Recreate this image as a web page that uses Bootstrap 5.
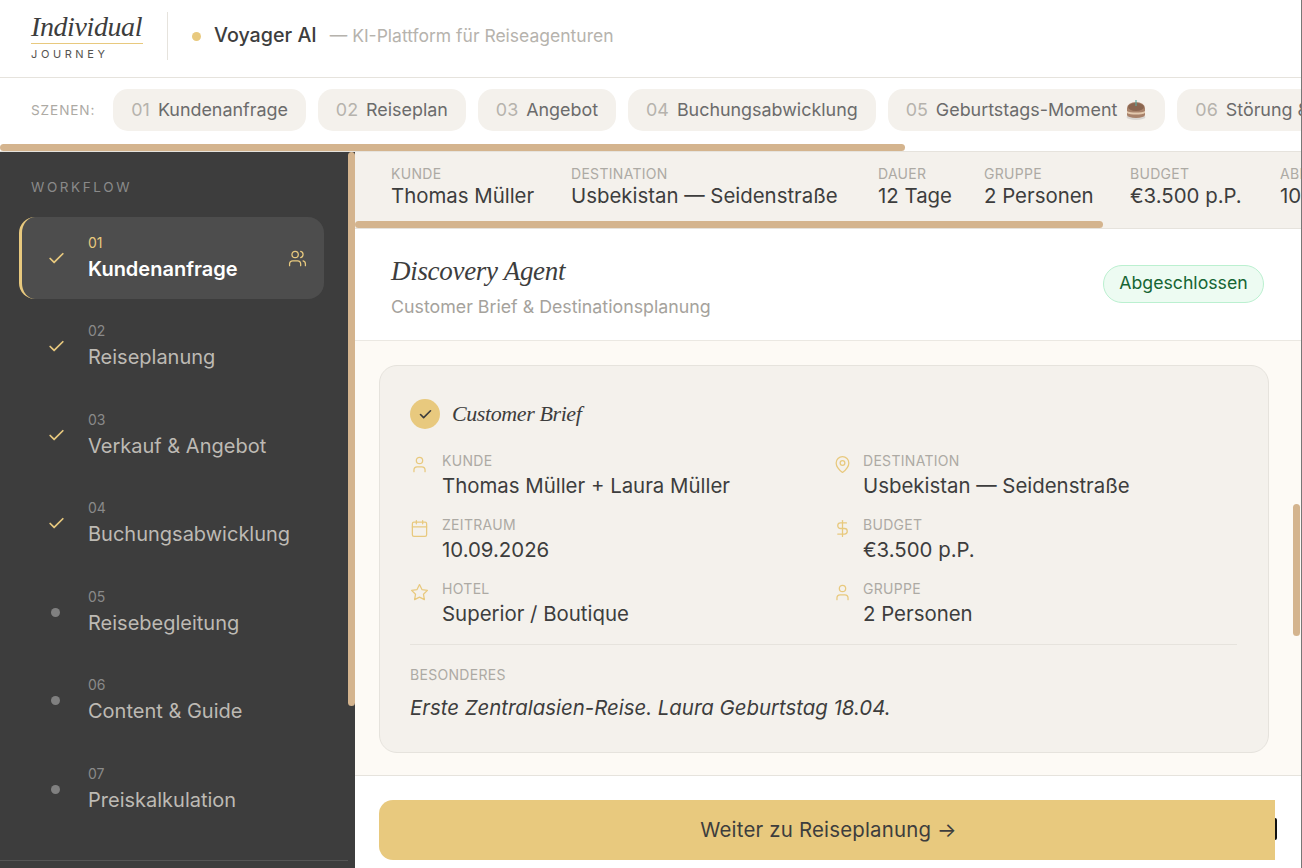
<!DOCTYPE html>
<html lang="de">
<head>
<meta charset="utf-8">
<title>Voyager AI</title>
<link href="https://cdn.jsdelivr.net/npm/bootstrap@5.3.0/dist/css/bootstrap.min.css" rel="stylesheet">
<style>
html,body{height:868px;overflow:hidden;margin:0}
body{font-family:"Inter","Noto Sans",sans-serif;color:#3d3d3d;background:#fff;border-right:1px solid #777;width:1302px}
.page-shell{height:868px;width:1301px}
.serif{font-family:"Liberation Serif",serif;font-style:italic}
.top-head{height:78px;border-bottom:1px solid #e6e3dd;padding:0 0 5px 31px}
.brand{width:112px;margin-top:-1px}
.brand-main{font-size:28px;line-height:31px;letter-spacing:-.4px;color:#3d3d3d;border-bottom:1px solid #e8c97e;height:33px;white-space:nowrap;font-weight:400}
.brand-sub{font-size:11px;letter-spacing:3.6px;line-height:14px;margin-top:3px;color:#55534f}
.head-rule{width:1px;height:48px;background:#e6e3dd;margin:0 24px 0 24px}
.head-dot{width:9px;height:9px;border-radius:50%;background:#e8c97e;margin-right:13px}
.head-name{font-size:19.7px;font-weight:500;letter-spacing:0;color:#3d3d3d;margin-right:13px}
.head-tag{font-size:17.5px;color:#b6b3ad}
.scene-bar{height:74px;padding-left:31px;padding-bottom:9px;gap:12px;border-bottom:1px solid #e6e3dd;overflow:hidden}
.scene-lbl{font-size:13.6px;letter-spacing:.9px;color:#adaaa4;margin-right:6px}
.scene-pill{height:42px;background:#f4f1ec;border-radius:15px;padding:0 18px;font-size:17.9px;color:#6b6b6b;flex-shrink:0;white-space:nowrap;gap:8px}
.scene-pill b{font-weight:400;color:#b6b3ad}
.thumb{position:absolute;background:#d4b48e;border-radius:4px}
.thumb-scene{left:0;bottom:0;width:905px;height:7px}
.work-area{height:716px}
.side{width:355px;background:#3d3d3d;padding:0 31px 0 19px;flex-shrink:0}
.thumb-side{right:0;top:0;width:7px;height:554px}
.side-title{font-size:13.5px;letter-spacing:2.6px;color:#8a8a8a;padding:27px 0 0 12px;height:65px;line-height:17px}
.step{height:82px;margin-bottom:6.5px;border-radius:16px;padding-left:25px;border-left:3px solid transparent}
.step-on{background:#4d4d4d;border-left-color:#e8c97e}
.step-mark{width:16px;margin-right:25px;line-height:0}
.step-dot{width:9px;height:9px;border-radius:50%;background:#808080;margin-left:4px}
.step-no{font-size:14px;line-height:18px;color:#8a8a8a;margin-top:-1px}
.step-on .step-no{color:#e8c97e}
.step-name{font-size:20px;line-height:26px;color:#bdbab4;margin-top:4px}
.step-on .step-name{color:#fff;font-weight:600}
.step-ic{margin-left:auto;margin-right:17px}
.side-rule{position:absolute;left:0;right:7px;bottom:7px;height:1px;background:#555}
.ctx{height:77px;background:#f4f1ec;padding:13px 0 0 36px;gap:36px;overflow:hidden;border-bottom:1px solid #e6e3dd;flex-shrink:0}
.ctx-item{flex-shrink:0;white-space:nowrap}
.ctx-item:nth-child(1){width:144px}
.ctx-item:nth-child(2){width:271px}
.ctx-item:nth-child(3){width:70px}
.ctx-item:nth-child(4){width:110px}
.ctx-item:nth-child(5){width:114px}
.ctx-l{font-size:14px;line-height:17px;letter-spacing:.3px;color:#adaaa4}
.ctx-v{font-size:20.4px;line-height:27px;color:#3d3d3d}
.thumb-ctx{left:0;bottom:0;width:748px;height:7px}
.agent{height:112px;padding:2px 37px 0 36px;border-bottom:1px solid #ebe8e2;flex-shrink:0}
.agent-name{font-size:27px;line-height:36px;letter-spacing:-.3px;color:#3d3d3d}
.agent-sub{font-size:17.8px;line-height:24px;color:#a5a29c;margin-top:6px}
.state{height:38px;border-radius:19px;background:#edfbf2;border:1px solid #bbf0d0;color:#166534;font-size:17.7px;width:161px;margin-top:-4px}
.body-pane{height:435px;background:#fdfaf5;padding:24px 32px 0 24px;flex-shrink:0;border-bottom:1px solid #e6e3dd}
.thumb-body{right:1px;top:352px;width:7px;height:132px}
.brief{height:388px;background:#f4f1ec;border:1px solid #e6e3dd;border-radius:18px;padding:33px 31px 0 30px}
.brief-check{width:30px;height:30px;border-radius:50%;background:#e8c97e}
.brief-name{font-size:22px;line-height:30px;letter-spacing:-.4px;margin-left:12px;color:#3d3d3d}
.fields{display:grid;grid-template-columns:423px 1fr;grid-auto-rows:64px;margin-top:15px}
.field-ic{width:32px;flex-shrink:0;padding-top:7px}
.field-ic2{width:30px}
.field-l{font-size:14px;line-height:17px;letter-spacing:.3px;color:#adaaa4;padding-top:8px}
.field-v{font-size:20.4px;line-height:27px;color:#3d3d3d;margin-top:3px}
.brief-rule{height:1px;background:#e6e3dd;margin-top:8px}
.note-l{font-size:14px;line-height:17px;letter-spacing:.3px;color:#adaaa4;margin-top:21px}
.note-v{font-size:20.4px;line-height:27px;font-style:italic;margin-top:11px}
.foot{height:92px;padding:24px 0 0 24px}
.go-btn{width:896px;height:60px;background:#e8c97e;border-radius:14px 0 0 14px;font-size:20.4px;letter-spacing:.2px;color:#3d3d3d;position:relative;padding-left:3px}
.go-btn::after{content:"";position:absolute;right:-1.5px;top:18px;width:1.5px;height:22px;background:#111;border-radius:0 2px 2px 0}
</style>
</head>
<body>
<div class="page-shell d-flex flex-column">
  <header class="top-head d-flex align-items-center flex-shrink-0">
    <div class="brand">
      <div class="brand-main serif">Individual</div>
      <div class="brand-sub">JOURNEY</div>
    </div>
    <div class="head-rule"></div>
    <span class="head-dot"></span>
    <span class="head-name">Voyager AI</span>
    <span class="head-tag">— KI-Plattform für Reiseagenturen</span>
  </header>

  <div class="scene-bar d-flex align-items-center position-relative flex-shrink-0">
    <span class="scene-lbl">SZENEN:</span>
    <span class="scene-pill d-flex align-items-center"><b>01</b>Kundenanfrage</span>
    <span class="scene-pill d-flex align-items-center"><b>02</b>Reiseplan</span>
    <span class="scene-pill d-flex align-items-center"><b>03</b>Angebot</span>
    <span class="scene-pill d-flex align-items-center"><b>04</b>Buchungsabwicklung</span>
    <span class="scene-pill d-flex align-items-center"><b>05</b>Geburtstags-Moment
      <svg width="22" height="22" viewBox="0 0 22 22"><ellipse cx="11" cy="18" rx="9.5" ry="3" fill="#d9d6d2"/><path d="M2 9a9 6 0 0 1 18 0v7a9 3 0 0 1-18 0z" fill="#a8826a"/><path d="M2 12c3 2 15 2 18 0v2c-3 2-15 2-18 0z" fill="#e3c9ae"/><ellipse cx="11" cy="8" rx="8" ry="4" fill="#8a6650"/><rect x="10.4" y="1" width="1.2" height="6" fill="#5fa8a0"/></svg></span>
    <span class="scene-pill d-flex align-items-center"><b>06</b>Störung &amp; Lösung</span>
    <div class="thumb thumb-scene"></div>
  </div>

  <div class="work-area d-flex">
    <aside class="side position-relative">
      <div class="side-title">WORKFLOW</div>
      <div class="step step-on d-flex align-items-center">
        <div class="step-mark"><svg width="19" height="19" viewBox="0 0 24 24" fill="none" stroke="#e8c97e" stroke-width="2.2" stroke-linecap="round" stroke-linejoin="round"><path d="M20 6 9 17l-5-5"/></svg></div>
        <div><div class="step-no">01</div><div class="step-name">Kundenanfrage</div></div>
        <svg class="step-ic" width="19" height="19" viewBox="0 0 24 24" fill="none" stroke="#e8c97e" stroke-width="1.6" stroke-linecap="round" stroke-linejoin="round"><path d="M16 21v-2a4 4 0 0 0-4-4H6a4 4 0 0 0-4 4v2"/><circle cx="9" cy="7" r="4"/><path d="M22 21v-2a4 4 0 0 0-3-3.87"/><path d="M16 3.13a4 4 0 0 1 0 7.75"/></svg>
      </div>
      <div class="step d-flex align-items-center">
        <div class="step-mark"><svg width="19" height="19" viewBox="0 0 24 24" fill="none" stroke="#e8c97e" stroke-width="2.2" stroke-linecap="round" stroke-linejoin="round"><path d="M20 6 9 17l-5-5"/></svg></div>
        <div><div class="step-no">02</div><div class="step-name">Reiseplanung</div></div>
      </div>
      <div class="step d-flex align-items-center">
        <div class="step-mark"><svg width="19" height="19" viewBox="0 0 24 24" fill="none" stroke="#e8c97e" stroke-width="2.2" stroke-linecap="round" stroke-linejoin="round"><path d="M20 6 9 17l-5-5"/></svg></div>
        <div><div class="step-no">03</div><div class="step-name">Verkauf &amp; Angebot</div></div>
      </div>
      <div class="step d-flex align-items-center">
        <div class="step-mark"><svg width="19" height="19" viewBox="0 0 24 24" fill="none" stroke="#e8c97e" stroke-width="2.2" stroke-linecap="round" stroke-linejoin="round"><path d="M20 6 9 17l-5-5"/></svg></div>
        <div><div class="step-no">04</div><div class="step-name">Buchungsabwicklung</div></div>
      </div>
      <div class="step d-flex align-items-center">
        <div class="step-mark"><div class="step-dot"></div></div>
        <div><div class="step-no">05</div><div class="step-name">Reisebegleitung</div></div>
      </div>
      <div class="step d-flex align-items-center">
        <div class="step-mark"><div class="step-dot"></div></div>
        <div><div class="step-no">06</div><div class="step-name">Content &amp; Guide</div></div>
      </div>
      <div class="step d-flex align-items-center">
        <div class="step-mark"><div class="step-dot"></div></div>
        <div><div class="step-no">07</div><div class="step-name">Preiskalkulation</div></div>
      </div>
      <div class="side-rule"></div>
      <div class="thumb thumb-side"></div>
    </aside>

    <main class="flex-grow-1 d-flex flex-column position-relative" style="min-width:0">
      <div class="ctx d-flex position-relative">
        <div class="ctx-item"><div class="ctx-l">KUNDE</div><div class="ctx-v">Thomas Müller</div></div>
        <div class="ctx-item"><div class="ctx-l">DESTINATION</div><div class="ctx-v">Usbekistan — Seidenstraße</div></div>
        <div class="ctx-item"><div class="ctx-l">DAUER</div><div class="ctx-v">12 Tage</div></div>
        <div class="ctx-item"><div class="ctx-l">GRUPPE</div><div class="ctx-v">2 Personen</div></div>
        <div class="ctx-item"><div class="ctx-l">BUDGET</div><div class="ctx-v">€3.500 p.P.</div></div>
        <div class="ctx-item"><div class="ctx-l">ABREISE</div><div class="ctx-v">10.09.2026</div></div>
        <div class="thumb thumb-ctx"></div>
      </div>

      <div class="agent d-flex align-items-center justify-content-between">
        <div>
          <div class="agent-name serif">Discovery Agent</div>
          <div class="agent-sub">Customer Brief &amp; Destinationsplanung</div>
        </div>
        <div class="state d-flex align-items-center justify-content-center">Abgeschlossen</div>
      </div>

      <div class="body-pane">
        <div class="brief">
          <div class="d-flex align-items-center">
            <div class="brief-check d-flex align-items-center justify-content-center"><svg width="15" height="15" viewBox="0 0 24 24" fill="none" stroke="#3d3d3d" stroke-width="2.6" stroke-linecap="round" stroke-linejoin="round"><path d="M20 6 9 17l-5-5"/></svg></div>
            <div class="brief-name serif">Customer Brief</div>
          </div>
          <div class="fields">
            <div class="d-flex"><div class="field-ic"><svg width="19" height="19" viewBox="0 0 24 24" fill="none" stroke="#e8c97e" stroke-width="1.6" stroke-linecap="round" stroke-linejoin="round"><path d="M19 21v-2a4 4 0 0 0-4-4H9a4 4 0 0 0-4 4v2"/><circle cx="12" cy="7" r="4"/></svg></div><div><div class="field-l">KUNDE</div><div class="field-v">Thomas Müller + Laura Müller</div></div></div>
            <div class="d-flex"><div class="field-ic field-ic2"><svg width="19" height="19" viewBox="0 0 24 24" fill="none" stroke="#e8c97e" stroke-width="1.6" stroke-linecap="round" stroke-linejoin="round"><path d="M20 10c0 6-8 12-8 12s-8-6-8-12a8 8 0 0 1 16 0Z"/><circle cx="12" cy="10" r="3"/></svg></div><div><div class="field-l">DESTINATION</div><div class="field-v">Usbekistan — Seidenstraße</div></div></div>
            <div class="d-flex"><div class="field-ic"><svg width="19" height="19" viewBox="0 0 24 24" fill="none" stroke="#e8c97e" stroke-width="1.6" stroke-linecap="round" stroke-linejoin="round"><rect x="3" y="4" width="18" height="18" rx="2"/><path d="M16 2v4M8 2v4M3 10h18"/></svg></div><div><div class="field-l">ZEITRAUM</div><div class="field-v">10.09.2026</div></div></div>
            <div class="d-flex"><div class="field-ic field-ic2"><svg width="19" height="19" viewBox="0 0 24 24" fill="none" stroke="#e8c97e" stroke-width="1.6" stroke-linecap="round" stroke-linejoin="round"><path d="M12 2v20"/><path d="M17 5H9.5a3.5 3.5 0 0 0 0 7h5a3.5 3.5 0 0 1 0 7H6"/></svg></div><div><div class="field-l">BUDGET</div><div class="field-v">€3.500 p.P.</div></div></div>
            <div class="d-flex"><div class="field-ic"><svg width="19" height="19" viewBox="0 0 24 24" fill="none" stroke="#e8c97e" stroke-width="1.6" stroke-linecap="round" stroke-linejoin="round"><path d="M12 2l3.09 6.26L22 9.27l-5 4.87 1.18 6.88L12 17.77l-6.18 3.25L7 14.14 2 9.27l6.91-1.01L12 2z"/></svg></div><div><div class="field-l">HOTEL</div><div class="field-v">Superior / Boutique</div></div></div>
            <div class="d-flex"><div class="field-ic field-ic2"><svg width="19" height="19" viewBox="0 0 24 24" fill="none" stroke="#e8c97e" stroke-width="1.6" stroke-linecap="round" stroke-linejoin="round"><path d="M19 21v-2a4 4 0 0 0-4-4H9a4 4 0 0 0-4 4v2"/><circle cx="12" cy="7" r="4"/></svg></div><div><div class="field-l">GRUPPE</div><div class="field-v">2 Personen</div></div></div>
          </div>
          <div class="brief-rule"></div>
          <div class="note-l">BESONDERES</div>
          <div class="note-v">Erste Zentralasien-Reise. Laura Geburtstag 18.04.</div>
        </div>
      </div>

      <div class="foot">
        <div class="go-btn d-flex align-items-center justify-content-center">Weiter zu Reiseplanung →</div>
      </div>
      <div class="thumb thumb-body"></div>
    </main>
  </div>
</div>
</body>
</html>
